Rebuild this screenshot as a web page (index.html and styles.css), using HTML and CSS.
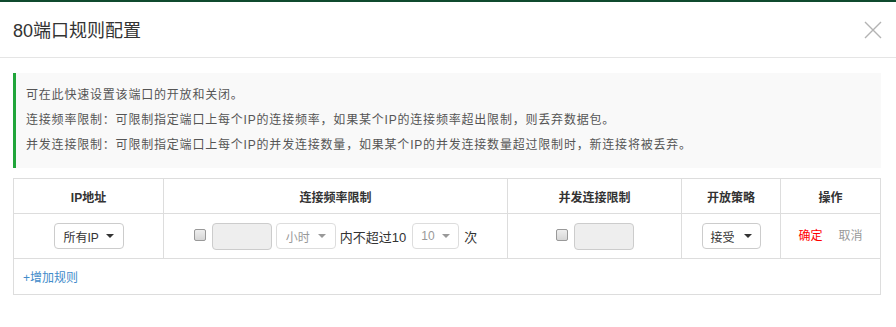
FILE: index.html
```html
<!DOCTYPE html>
<html lang="zh">
<head>
  <meta charset="UTF-8">
  <title>80端口规则配置</title>
  <link rel="stylesheet" href="styles.css">
</head>
<body>
  <div class="dialog">
    <div class="dialog-head">
      <span class="dialog-title">80端口规则配置</span>
      <a class="dialog-close" href="#" title="关闭">
        <svg width="18" height="18" viewBox="0 0 18 18">
          <path d="M1 1 L17 17 M17 1 L1 17" stroke="#b3b3b3" stroke-width="1.4" fill="none"/>
        </svg>
      </a>
    </div>
    <div class="dialog-body">
      <div class="tips">
        <p>可在此快速设置该端口的开放和关闭。</p>
        <p>连接频率限制：可限制指定端口上每个IP的连接频率，如果某个IP的连接频率超出限制，则丢弃数据包。</p>
        <p>并发连接限制：可限制指定端口上每个IP的并发连接数量，如果某个IP的并发连接数量超过限制时，新连接将被丢弃。</p>
      </div>
      <table class="rule-table">
        <thead>
          <tr>
            <th class="col-ip">IP地址</th>
            <th class="col-rate">连接频率限制</th>
            <th class="col-conn">并发连接限制</th>
            <th class="col-policy">开放策略</th>
            <th class="col-op">操作</th>
          </tr>
        </thead>
        <tbody>
          <tr>
            <td>
              <div class="select select-ip"><span>所有IP</span><i class="caret"></i></div>
            </td>
            <td>
              <div class="cell-line">
                <span class="check"></span>
                <span class="num-input"></span>
                <div class="select select-unit is-disabled"><span>小时</span><i class="caret"></i></div>
                <span class="label">内不超过10</span>
                <div class="select select-num is-disabled"><span>10</span><i class="caret"></i></div>
                <span class="label">次</span>
              </div>
            </td>
            <td>
              <div class="cell-line">
                <span class="check"></span>
                <span class="num-input"></span>
              </div>
            </td>
            <td>
              <div class="select select-policy"><span>接受</span><i class="caret"></i></div>
            </td>
            <td>
              <div class="ops">
                <a class="op-ok" href="#">确定</a>
                <a class="op-cancel" href="#">取消</a>
              </div>
            </td>
          </tr>
        </tbody>
        <tfoot>
          <tr>
            <td colspan="5"><a class="add-rule" href="#">+增加规则</a></td>
          </tr>
        </tfoot>
      </table>
    </div>
  </div>
</body>
</html>
```

FILE: styles.css
```css
body {
  margin: 0;
  background: #fff;
  font-family: "Liberation Sans", "Noto Sans CJK SC", sans-serif;
  color: #333;
}
a { text-decoration: none; }
.dialog {
  border-top: 2px solid #0f4a2e;
  background: #fff;
}
.dialog-head {
  height: 55px;
  border-bottom: 1px solid #e5e5e5;
  display: flex;
  align-items: center;
  justify-content: space-between;
  padding: 0 14px 0 13px;
}
.dialog-title {
  font-size: 18px;
  color: #333;
  line-height: 1;
  margin-top: 2px;
}
.dialog-close {
  display: flex;
  width: 18px;
  height: 18px;
}
.dialog-body {
  padding: 15px 15px 0 13px;
}
.tips {
  background: #f9f9f9;
  border-left: 3px solid #20a53a;
  padding: 10px 10px 10px 10px;
  color: #555;
  font-size: 12px;
  letter-spacing: 0.8px;
}
.tips p {
  margin: 0;
  line-height: 25px;
}
.rule-table {
  width: 100%;
  margin-top: 10px;
  border-collapse: collapse;
  border: 1px solid #ddd;
  font-size: 12px;
}
.rule-table th,
.rule-table td {
  border: 1px solid #ddd;
  text-align: center;
  padding: 0;
}
.rule-table th {
  height: 34px;
  font-weight: bold;
  color: #333;
}
.rule-table tbody td { height: 44px; }
.rule-table tfoot td {
  height: 35px;
  text-align: left;
  padding-left: 9px;
}
.col-ip { width: 149px; }
.col-rate { width: 343px; }
.col-conn { width: 173px; }
.col-policy { width: 98px; }
.cell-line {
  display: flex;
  align-items: center;
  justify-content: center;
  gap: 4px;
}
.check {
  width: 12px;
  height: 12px;
  box-sizing: border-box;
  border: 1px solid #999;
  border-radius: 2px;
  background: linear-gradient(#eee, #d6d6d6);
  margin-bottom: 3px;
}
.num-input {
  width: 60px;
  height: 27px;
  box-sizing: border-box;
  border: 1px solid #ccc;
  border-radius: 4px;
  background: #eee;
}
.cell-line .check + .num-input { margin-left: 2px; }
.select {
  display: inline-flex;
  align-items: center;
  justify-content: space-between;
  height: 26px;
  box-sizing: border-box;
  border: 1px solid #ccc;
  border-radius: 4px;
  padding: 0 9px;
  font-size: 12px;
  color: #333;
  background: #fff;
  vertical-align: middle;
}
.caret {
  width: 0;
  height: 0;
  border-left: 4px solid transparent;
  border-right: 4px solid transparent;
  border-top: 4px solid #333;
}
.select.is-disabled { border-color: #ddd; color: #999; }
.select.is-disabled .caret { border-top-color: #999; }
.select-ip { width: 70px; }
.select-unit { width: 60px; }
.select-num { width: 47px; padding: 0 8px; margin-left: 2px; }
.select-policy { width: 59px; padding: 0 8px; }
.label {
  font-size: 13px;
  color: #333;
}
.label:last-child { margin-left: 1px; }
.ops {
  display: flex;
  justify-content: center;
  gap: 16px;
  margin-bottom: 4px;
}
.op-ok { color: #f00; }
.op-cancel { color: #999; }
.add-rule {
  color: #428bca;
  font-size: 12px;
}
```
